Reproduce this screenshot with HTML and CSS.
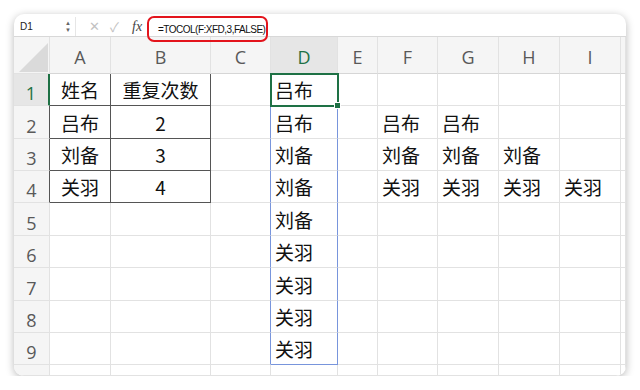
FILE: index.html
```html
<!DOCTYPE html>
<html lang="zh-CN">
<head>
  <meta charset="UTF-8">
  <title>TOCOL</title>
  <link rel="stylesheet" href="styles.css">
</head>
<body>

<div class="window">
  <div class="formula-bar">
    <div class="name-box">
      <span>D1</span>
      <span class="spin">▲<br>▼</span>
    </div>
    <div class="fx-tools">
      <span class="tool">✕</span>
      <span class="tool">✓</span>
      <span class="fx">fx</span>
    </div>
    <div class="formula">=TOCOL(F:XFD,3,FALSE)</div>
    <div class="mark"></div>
  </div>

  <div class="sheet">
    <!-- header row -->
    <div class="corner">
      <svg width="32" height="32" viewBox="0 0 32 32"><path d="M31 2 L31 31 L2 31 Z" fill="#dadada"/></svg>
    </div>
    <div class="ch">A</div>
    <div class="ch">B</div>
    <div class="ch">C</div>
    <div class="ch ch-sel">D</div>
    <div class="ch">E</div>
    <div class="ch">F</div>
    <div class="ch">G</div>
    <div class="ch">H</div>
    <div class="ch">I</div>
    <div class="ch"></div>

    <!-- row 1 -->
    <div class="rh rh-sel">1</div>
    <div class="c mid dark-r dark-b">姓名</div>
    <div class="c mid dark-r dark-b">重复次数</div>
    <div class="c"></div>
    <div class="c active">吕布</div>
    <div class="c"></div>
    <div class="c"></div>
    <div class="c"></div>
    <div class="c"></div>
    <div class="c"></div>
    <div class="c"></div>

    <!-- row 2 -->
    <div class="rh dark-edge">2</div>
    <div class="c mid dark-r dark-b">吕布</div>
    <div class="c mid dark-r dark-b">2</div>
    <div class="c spill-l"></div>
    <div class="c spill-r">吕布</div>
    <div class="c"></div>
    <div class="c">吕布</div>
    <div class="c">吕布</div>
    <div class="c"></div>
    <div class="c"></div>
    <div class="c"></div>

    <!-- row 3 -->
    <div class="rh dark-edge">3</div>
    <div class="c mid dark-r dark-b">刘备</div>
    <div class="c mid dark-r dark-b">3</div>
    <div class="c spill-l"></div>
    <div class="c spill-r">刘备</div>
    <div class="c"></div>
    <div class="c">刘备</div>
    <div class="c">刘备</div>
    <div class="c">刘备</div>
    <div class="c"></div>
    <div class="c"></div>

    <!-- row 4 -->
    <div class="rh dark-edge">4</div>
    <div class="c mid dark-r dark-b">关羽</div>
    <div class="c mid dark-r dark-b">4</div>
    <div class="c spill-l"></div>
    <div class="c spill-r">刘备</div>
    <div class="c"></div>
    <div class="c">关羽</div>
    <div class="c">关羽</div>
    <div class="c">关羽</div>
    <div class="c">关羽</div>
    <div class="c"></div>

    <!-- row 5 -->
    <div class="rh">5</div>
    <div class="c"></div>
    <div class="c"></div>
    <div class="c spill-l"></div>
    <div class="c spill-r">刘备</div>
    <div class="c"></div>
    <div class="c"></div>
    <div class="c"></div>
    <div class="c"></div>
    <div class="c"></div>
    <div class="c"></div>

    <!-- row 6 -->
    <div class="rh">6</div>
    <div class="c"></div>
    <div class="c"></div>
    <div class="c spill-l"></div>
    <div class="c spill-r">关羽</div>
    <div class="c"></div>
    <div class="c"></div>
    <div class="c"></div>
    <div class="c"></div>
    <div class="c"></div>
    <div class="c"></div>

    <!-- row 7 -->
    <div class="rh">7</div>
    <div class="c"></div>
    <div class="c"></div>
    <div class="c spill-l"></div>
    <div class="c spill-r">关羽</div>
    <div class="c"></div>
    <div class="c"></div>
    <div class="c"></div>
    <div class="c"></div>
    <div class="c"></div>
    <div class="c"></div>

    <!-- row 8 -->
    <div class="rh">8</div>
    <div class="c"></div>
    <div class="c"></div>
    <div class="c spill-l"></div>
    <div class="c spill-r">关羽</div>
    <div class="c"></div>
    <div class="c"></div>
    <div class="c"></div>
    <div class="c"></div>
    <div class="c"></div>
    <div class="c"></div>

    <!-- row 9 -->
    <div class="rh">9</div>
    <div class="c"></div>
    <div class="c"></div>
    <div class="c spill-l"></div>
    <div class="c spill-r spill-b">关羽</div>
    <div class="c"></div>
    <div class="c"></div>
    <div class="c"></div>
    <div class="c"></div>
    <div class="c"></div>
    <div class="c"></div>

    <!-- row 10 (cut off) -->
    <div class="rh"></div>
    <div class="c"></div>
    <div class="c"></div>
    <div class="c"></div>
    <div class="c"></div>
    <div class="c"></div>
    <div class="c"></div>
    <div class="c"></div>
    <div class="c"></div>
    <div class="c"></div>
    <div class="c"></div>
  </div>
</div>

</body>
</html>
```

FILE: styles.css
```css
body {
  margin: 0;
  background: #fff;
  font-family: "Noto Sans CJK SC", "Noto Sans", sans-serif;
}
.window {
  margin: 14px 0 0 14px;
  width: 612px;
  height: 362px;
  border-radius: 10px;
  background: #fff;
  box-shadow: 0 2px 9px rgba(0, 0, 0, 0.28);
  overflow: hidden;
  display: flex;
  flex-direction: column;
}
.formula-bar {
  position: relative;
  z-index: 2;
  height: 23px;
  flex: none;
  display: flex;
  align-items: center;
  padding-top: 3px;
  box-sizing: border-box;
  border-bottom: 1px solid #d8d8d8;
  font-family: "Liberation Sans", Arial, sans-serif;
}
.name-box {
  width: 62px;
  height: 100%;
  display: flex;
  align-items: center;
  justify-content: space-between;
  padding: 0 4px 0 6px;
  box-sizing: border-box;
  border-right: 1px solid #e6e6e6;
  font-size: 10px;
  color: #222;
}
.spin {
  font-size: 6px;
  line-height: 7px;
  color: #666;
  text-align: center;
}
.fx-tools {
  display: flex;
  align-items: center;
  width: 71px;
  padding-left: 13px;
  box-sizing: border-box;
  gap: 10px;
}
.tool {
  color: #c2c2c2;
  font-size: 13px;
}
.fx {
  margin-left: 3px;
  font-family: "Liberation Serif", serif;
  font-style: italic;
  font-size: 14px;
  color: #444;
}
.formula {
  padding-left: 11px;
  padding-top: 6px;
  font-size: 10px;
  letter-spacing: -0.5px;
  color: #111;
}
.mark {
  position: absolute;
  left: 133px;
  top: 2px;
  width: 121px;
  height: 26px;
  box-sizing: border-box;
  border: 2px solid #e3141c;
  border-radius: 7px;
}
.sheet {
  flex: 1;
  display: grid;
  grid-template-columns: 36px 61px 100px 60px 67px 40px 60px 61px 61px 61px 1fr;
  grid-template-rows: 37px 32px 33px 32px 32px 33px 32px 33px 32px 32px 1fr;
}
.sheet > div {
  box-sizing: border-box;
  border-right: 1px solid #e2e2e2;
  border-bottom: 1px solid #e2e2e2;
  display: flex;
  align-items: center;
  overflow: hidden;
}
.corner {
  background: #f5f5f5;
  justify-content: flex-end;
  align-items: flex-end !important;
}
.corner svg {
  display: block;
}
.ch {
  background: #f5f5f5;
  justify-content: center;
  padding-top: 4px;
  font-family: "Open Sans", sans-serif;
  font-size: 18px;
  color: #595959;
  border-bottom-color: #d6d6d6 !important;
}
.ch-sel {
  background: #e6e6e6;
  color: #1e7145;
}
.rh {
  background: #f5f5f5;
  justify-content: center;
  font-family: "Open Sans", sans-serif;
  font-size: 18px;
  color: #595959;
  padding-top: 7px;
}
.rh-sel {
  background: #e6e6e6;
  color: #1e7145;
  border-right: 2px solid #1e7145 !important;
}
.dark-edge {
  border-right-color: #555 !important;
}
.c {
  padding-left: 4px;
  font-size: 19px;
  color: #111;
  background: #fff;
}
.mid {
  justify-content: center;
  padding-left: 0;
}
.dark-r {
  border-right-color: #555 !important;
}
.dark-b {
  border-bottom-color: #555 !important;
}
.spill-l {
  border-right-color: #7895dc !important;
}
.spill-r {
  border-right-color: #7895dc !important;
}
.spill-b {
  border-bottom-color: #7895dc !important;
}
.active {
  position: relative;
  overflow: visible !important;
  outline: 2px solid #1e7145;
  outline-offset: -1px;
}
.active::after {
  content: "";
  position: absolute;
  right: -4px;
  bottom: -4px;
  width: 5px;
  height: 5px;
  background: #1e7145;
  border: 1px solid #fff;
}
```
